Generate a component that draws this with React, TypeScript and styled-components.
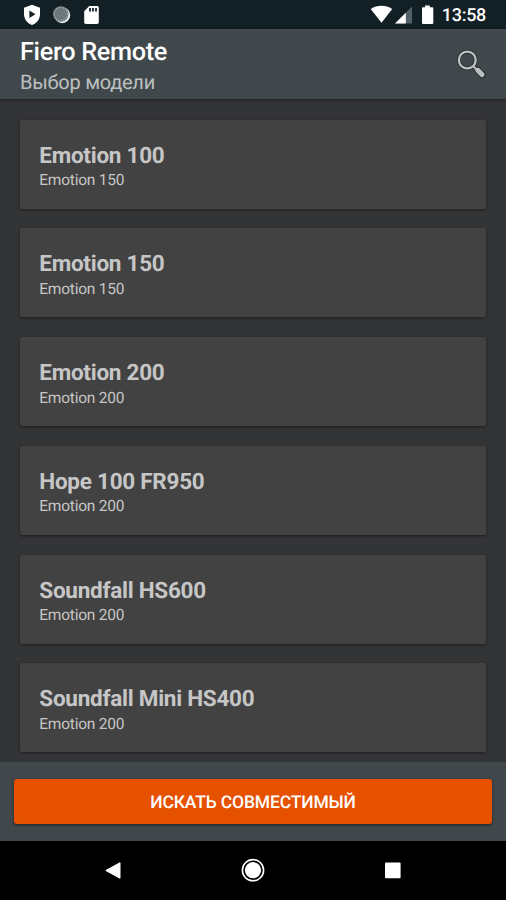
import React from "react";
import styled, { createGlobalStyle } from "styled-components";

const GlobalStyle = createGlobalStyle`
  * { box-sizing: border-box; }
  body { margin: 0; background: #333436; }
`;

const Screen = styled.div`
  display: flex;
  flex-direction: column;
  width: 506px;
  height: 900px;
  overflow: hidden;
  background: #333436;
  font-family: Roboto, "Noto Sans", sans-serif;
  text-rendering: geometricPrecision;
`;

const StatusBar = styled.div`
  display: flex;
  justify-content: space-between;
  flex: none;
  height: 29px;
  padding-right: 20px;
  background: #122026;
`;

const StatusText = styled.span`
  width: 46px;
  color: #fff;
  font-size: 18px;
  font-weight: 500;
  letter-spacing: -0.3px;
  line-height: 31px;
  text-align: right;
`;

const StatusGroup = styled.div`
  display: flex;
`;

const AppBar = styled.header`
  display: flex;
  justify-content: space-between;
  flex: none;
  height: 70px;
  padding: 0 18px 0 20px;
  background: #41484b;
  box-shadow: 0 1px 3px rgba(0, 0, 0, 0.4);
  z-index: 1;
`;

const AppTitle = styled.h1`
  margin: 9px 0 0;
  color: #fff;
  font-size: 25.3px;
  font-weight: 500;
  letter-spacing: -0.33px;
  line-height: 30px;
`;

const AppSubtitle = styled.div`
  margin-top: -1px;
  color: #bdc0c1;
  font-size: 20px;
  letter-spacing: -0.25px;
  line-height: 30px;
`;

const SearchButton = styled.button`
  display: block;
  width: 32px;
  padding: 0;
  border: 0;
  background: none;
`;

const List = styled.main`
  display: flex;
  flex-direction: column;
  gap: 19.8px;
  flex: none;
  height: 663px;
  padding: 20.5px 20px 0;
  overflow: hidden;
`;

const Card = styled.article`
  flex: none;
  height: 89px;
  padding: 23px 19.3px 0;
  border-radius: 2px;
  background: #424242;
  box-shadow: 0 1px 3px rgba(0, 0, 0, 0.42);
`;

const CardTitle = styled.h2`
  margin: 0;
  color: #c6c6c6;
  font-size: 22.5px;
  font-weight: 700;
  letter-spacing: -0.26px;
  line-height: 27px;
`;

const CardModel = styled.div`
  margin-top: -0.6px;
  color: #c6c6c6;
  font-size: 15.5px;
  letter-spacing: -0.24px;
  line-height: 22px;
`;

const Footer = styled.footer`
  flex: none;
  height: 79px;
  padding: 17px 14px 0;
  background: #41484b;
`;

const FindButton = styled.button`
  display: block;
  width: 100%;
  height: 45px;
  padding: 2px 0 0;
  border: 0;
  border-radius: 3px;
  background: #e65100;
  box-shadow: 0 1px 3px rgba(0, 0, 0, 0.6);
  color: #fff;
  font-family: inherit;
  font-size: 17.5px;
  font-weight: 500;
  letter-spacing: -0.16px;
  text-rendering: inherit;
`;

const NavBar = styled.nav`
  display: flex;
  justify-content: space-between;
  flex: none;
  height: 59px;
  padding: 16px 101px 0 100px;
  background: #000;
`;

const models = [
  ["Emotion 100", "Emotion 150"],
  ["Emotion 150", "Emotion 150"],
  ["Emotion 200", "Emotion 200"],
  ["Hope 100 FR950", "Emotion 200"],
  ["Soundfall HS600", "Emotion 200"],
  ["Soundfall Mini HS400", "Emotion 200"],
];

const NotificationIcons = () => (
  <svg width="110" height="29" viewBox="0 0 110 29">
    <path d="M32 4.8 L40 7.8 V14 C40 19 37 23 32 25 C27 23 24 19 24 14 V7.8 Z" fill="#fff" />
    <path d="M29.4 10.4 V18 L35.4 14.2 Z" fill="#122026" />
    <circle cx="62.2" cy="15.2" r="8" fill="#e8eced" />
    <circle cx="60.8" cy="14" r="7.8" fill="#6b777b" />
    <circle cx="60.8" cy="14" r="6.7" fill="none" stroke="#a5adb0" strokeWidth="1.6" strokeDasharray="1 1.4" />
    <path d="M89.3 6 H97 Q98.8 6 98.8 7.8 V22.2 Q98.8 24 97 24 H86 Q84.2 24 84.2 22.2 V11.2 Z" fill="#fff" />
    <path d="M90 8 V11.5 M93 8 V11.5 M96 8 V11.5" stroke="#122026" strokeWidth="1.8" />
  </svg>
);

const SystemIcons = () => (
  <svg width="70" height="29" viewBox="-1 0 70 29">
    <path d="M-.3 9 C6 4.8 15 4.8 21.2 9 L10.5 22.8 Z" fill="#fff" />
    <path d="M41 6.5 V23.5 H24 Z" fill="#526067" />
    <path d="M34.8 12.7 V23.5 H24 Z" fill="#fff" />
    <path d="M54 5.5 H58.8 V7.2 H61.2 Q62.3 7.2 62.3 8.3 V22.8 Q62.3 24 61.2 24 H52 Q51 24 51 22.8 V8.3 Q51 7.2 52 7.2 H54 Z" fill="#fff" />
  </svg>
);

const SearchIcon = () => (
  <svg width="32" height="70" viewBox="456 29 32 70" fill="none">
    <circle cx="467.3" cy="60" r="8.4" stroke="#2b3032" strokeWidth="4.2" />
    <path d="M473 66 L476.5 69.5" stroke="#2b3032" strokeWidth="4" />
    <path d="M477.8 70.3 L482.3 74.8" stroke="#2b3032" strokeWidth="7" strokeLinecap="round" />
    <circle cx="467.3" cy="60" r="8.4" stroke="#bcc0c1" strokeWidth="2.3" />
    <path d="M473 66 L477 70" stroke="#bcc0c1" strokeWidth="2" />
    <path d="M477.8 70.3 L482 74.5" stroke="#bcc0c1" strokeWidth="5" strokeLinecap="round" />
  </svg>
);

const BackIcon = () => (
  <svg width="26" height="26" viewBox="100 857 26 26">
    <path d="M120 862.7 V878.3 L105.8 870.5 Z" fill="#fff" stroke="#fff" strokeLinejoin="round" />
  </svg>
);

const HomeIcon = () => (
  <svg width="26" height="26" viewBox="239.6 857.2 26 26">
    <circle cx="252.6" cy="870.4" r="10.6" fill="none" stroke="#fff" strokeWidth="1.6" />
    <circle cx="252.6" cy="870.4" r="8.1" fill="#fff" />
  </svg>
);

const RecentsIcon = () => (
  <svg width="26" height="26" viewBox="379 857 26 26">
    <rect x="385" y="862.6" width="15.6" height="15.6" rx="1" fill="#fff" />
  </svg>
);

export default function App() {
  return (
    <Screen>
      <GlobalStyle />
      <StatusBar>
        <NotificationIcons />
        <StatusGroup>
          <SystemIcons />
          <StatusText>13:58</StatusText>
        </StatusGroup>
      </StatusBar>
      <AppBar>
        <div>
          <AppTitle>Fiero Remote</AppTitle>
          <AppSubtitle>Выбор модели</AppSubtitle>
        </div>
        <SearchButton aria-label="Поиск">
          <SearchIcon />
        </SearchButton>
      </AppBar>
      <List>
        {models.map(([name, model]) => (
          <Card key={name}>
            <CardTitle>{name}</CardTitle>
            <CardModel>{model}</CardModel>
          </Card>
        ))}
      </List>
      <Footer>
        <FindButton>ИСКАТЬ СОВМЕСТИМЫЙ</FindButton>
      </Footer>
      <NavBar>
        <BackIcon />
        <HomeIcon />
        <RecentsIcon />
      </NavBar>
    </Screen>
  );
}
